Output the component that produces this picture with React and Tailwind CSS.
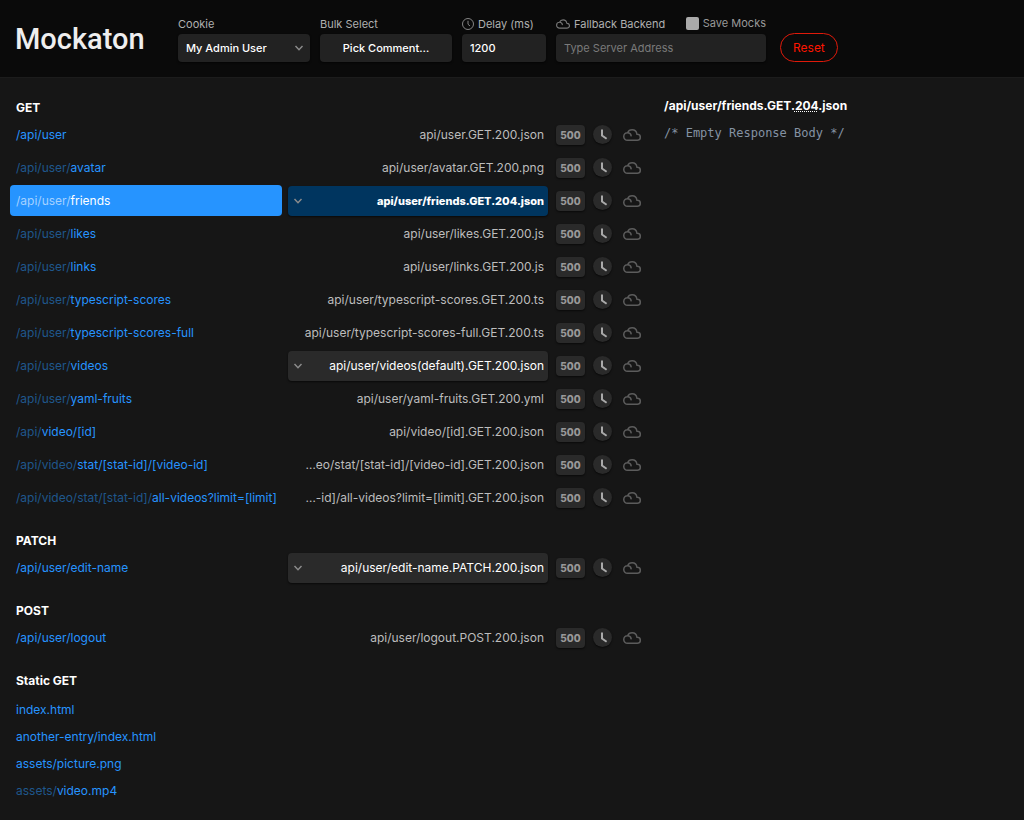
import React, { useState } from 'react'
import clsx from 'clsx'

const GROUPS = [
  {
    method: 'GET',
    routes: [
      { dim: '', url: '/api/user', file: 'api/user.GET.200.json' },
      { dim: '/api/user/', url: 'avatar', file: 'api/user/avatar.GET.200.png' },
      { dim: '/api/user/', url: 'friends', file: 'api/user/friends.GET.204.json', multiple: true, custom: true },
      { dim: '/api/user/', url: 'likes', file: 'api/user/likes.GET.200.js' },
      { dim: '/api/user/', url: 'links', file: 'api/user/links.GET.200.js' },
      { dim: '/api/user/', url: 'typescript-scores', file: 'api/user/typescript-scores.GET.200.ts' },
      { dim: '/api/user/', url: 'typescript-scores-full', file: 'api/user/typescript-scores-full.GET.200.ts' },
      { dim: '/api/user/', url: 'videos', file: 'api/user/videos(default).GET.200.json', multiple: true },
      { dim: '/api/user/', url: 'yaml-fruits', file: 'api/user/yaml-fruits.GET.200.yml' },
      { dim: '/api/', url: 'video/[id]', file: 'api/video/[id].GET.200.json' },
      { dim: '/api/video/', url: 'stat/[stat-id]/[video-id]', file: '…eo/stat/[stat-id]/[video-id].GET.200.json' },
      { dim: '/api/video/stat/[stat-id]/', url: 'all-videos?limit=[limit]', file: '…-id]/all-videos?limit=[limit].GET.200.json' },
    ],
  },
  {
    method: 'PATCH',
    routes: [{ dim: '', url: '/api/user/edit-name', file: 'api/user/edit-name.PATCH.200.json', multiple: true }],
  },
  {
    method: 'POST',
    routes: [{ dim: '', url: '/api/user/logout', file: 'api/user/logout.POST.200.json' }],
  },
]

const STATIC_FILES = [
  { dim: '', url: 'index.html' },
  { dim: '', url: 'another-entry/index.html' },
  { dim: '', url: 'assets/picture.png' },
  { dim: 'assets/', url: 'video.mp4' },
]

function CloudIcon({ className }) {
  return (
    <svg viewBox="0 0 24 24" fill="none" stroke="currentColor" strokeWidth="2" strokeLinecap="round" strokeLinejoin="round" className={className} aria-hidden="true">
      <path d="M6.1 8.9c.98-2.3 3.3-3.9 6-3.9 3.3 0 6 2.5 6.4 5.7.05.3.1.35.6.36 2.2 0 4 1.8 4 4s-1.8 4-4 4H6c-2.8 0-5-2.2-5-5s2.2-5 5-5c2.6 0 4.5 1.7 4.9 4" />
    </svg>
  )
}

function ClockIcon({ className }) {
  return (
    <svg viewBox="0 0 24 24" fill="none" stroke="currentColor" strokeWidth="2" className={className} aria-hidden="true">
      <circle cx="12" cy="12" r="11" />
      <path d="M12 5.5v7l4 3.5" />
    </svg>
  )
}

function DelayHands() {
  return (
    <svg viewBox="0 0 19 19" fill="none" stroke="currentColor" strokeWidth="2" className="size-[19px]" aria-hidden="true">
      <path d="M9 4.5v6l4.6 3.2" />
    </svg>
  )
}

function Chevron({ className }) {
  return (
    <svg viewBox="0 0 10 10" fill="none" stroke="currentColor" strokeWidth="1.4" className={clsx('pointer-events-none absolute top-1/2 size-[10px] -translate-y-1/2 text-[#8c8c8c]', className)} aria-hidden="true">
      <path d="M1.5 3 5 6.8 8.5 3" />
    </svg>
  )
}

const LABEL = 'flex h-4 items-center gap-1 text-[11px] text-[#b0b0b0]'
const FIELD = 'h-7 w-full appearance-none rounded-[4px] bg-[#222] px-2 text-[11px] font-medium text-white shadow-[0_1px_2px_rgba(0,0,0,0.6)] outline-none placeholder:font-normal placeholder:text-[#7a7a7a]'

function Header() {
  return (
    <header className="flex items-start border-b border-[#1c1c1c] bg-[#0a0a0a] pt-4 pb-[15px] pl-[15px]">
      <h1 className="mt-[6px] w-[163px] font-['Roboto',sans-serif] text-[29px] leading-[34px] font-medium text-[#eee]">Mockaton</h1>
      <form className="flex items-start gap-[10px]" onSubmit={(e) => e.preventDefault()}>
        <div className="flex w-[132px] flex-col gap-[2px]">
          <label htmlFor="cookie" className={LABEL}>Cookie</label>
          <div className="relative">
            <select id="cookie" className={FIELD}>
              <option>My Admin User</option>
            </select>
            <Chevron className="right-[6px]" />
          </div>
        </div>
        <div className="flex w-[132px] flex-col gap-[2px]">
          <label htmlFor="bulk" className={LABEL}>Bulk Select</label>
          <select id="bulk" className={clsx(FIELD, 'text-center')}>
            <option>Pick Comment…</option>
          </select>
        </div>
        <div className="flex w-[84px] flex-col gap-[2px]">
          <label htmlFor="delay" className={LABEL}>
            <ClockIcon className="size-3 text-[#858585]" />
            Delay (ms)
          </label>
          <input id="delay" type="text" inputMode="numeric" defaultValue="1200" className={FIELD} />
        </div>
        <div className="flex w-[210px] flex-col gap-[2px]">
          <div className="flex justify-between">
            <label htmlFor="fallback" className={LABEL}>
              <CloudIcon className="size-[14px] text-[#757575]" />
              Fallback Backend
            </label>
            <label htmlFor="save" className="flex h-[14px] items-center gap-1 text-[11px] text-[#999]">
              <input id="save" type="checkbox" className="size-[13px] appearance-none rounded-[2px] bg-[#aaa]" />
              Save Mocks
            </label>
          </div>
          <input id="fallback" type="url" placeholder="Type Server Address" className={FIELD} />
        </div>
        <button type="button" className="mt-[17px] ml-1 h-[29px] rounded-full border border-[#e01a0a] px-3 text-[12px] text-[#ff1500]">Reset</button>
      </form>
    </header>
  )
}

function RouteRow({ route, selected, onSelect }) {
  const id = route.dim + route.url
  return (
    <li className="flex h-[33px] items-center">
      <a
        href="#preview"
        onClick={onSelect}
        className={clsx('flex h-[31px] w-[272px] items-center rounded-[4px] pl-[6px] whitespace-nowrap', selected ? 'bg-[#2694ff] text-white' : 'text-[#2694ff]')}
      >
        <span className={selected ? 'text-[#a4d1ff]' : 'text-[#1f578c]'}>{route.dim}</span>
        <span>{route.url}</span>
      </a>
      <div className="relative ml-[6px] w-[260px]">
        <select
          aria-label={'Mock for ' + id}
          disabled={!route.multiple}
          className={clsx(
            'h-[30px] w-full appearance-none rounded-[4px] px-1 text-right opacity-100 outline-none [text-align-last:right]',
            !route.multiple && 'bg-transparent text-[#bdbdbd]',
            route.multiple && 'text-white shadow-[0_1px_2px_rgba(0,0,0,0.6)]',
            route.multiple && (route.custom ? 'bg-[#00355f] text-[11px] font-extrabold' : 'bg-[#2a2a2a]'),
          )}
        >
          <option>{route.file}</option>
        </select>
        {route.multiple && <Chevron className="left-[5px]" />}
      </div>
      <button type="button" aria-label={'Respond 500 on ' + id} className="ml-2 h-5 w-[29px] rounded-[4px] bg-[#2a2a2a] text-[10px] font-extrabold text-[#999] shadow-[0_1px_2px_rgba(0,0,0,0.6)]">
        500
      </button>
      <button type="button" aria-label={'Delay ' + id} className="ml-2 size-[19px] rounded-full bg-[#2a2a2a] text-[#aaa] shadow-[0_1px_2px_rgba(0,0,0,0.6)]">
        <DelayHands />
      </button>
      <button type="button" aria-label={'Proxy ' + id} className="ml-[11px] text-[#5c5c5c]">
        <CloudIcon className="size-[18px]" />
      </button>
    </li>
  )
}

export default function App() {
  const [selected, setSelected] = useState('/api/user/friends')
  return (
    <div className="min-h-screen bg-[#161616] font-['Inter',sans-serif] text-[12px] leading-[18px] text-white">
      <Header />
      <main className="flex items-start pt-[21px] pb-4 pl-[10px]">
        <div className="flex w-[632px] shrink-0 flex-col gap-[18px]">
          {GROUPS.map((group) => (
            <section key={group.method} className="flex flex-col gap-[1px]">
              <h2 className="pl-[6px] font-bold">{group.method}</h2>
              <ul>
                {group.routes.map((route) => (
                  <RouteRow
                    key={route.file}
                    route={route}
                    selected={route.dim + route.url === selected}
                    onSelect={() => setSelected(route.dim + route.url)}
                  />
                ))}
              </ul>
            </section>
          ))}
          <section className="flex flex-col gap-[6px] pl-[6px]">
            <h2 className="font-bold">Static GET</h2>
            <ul>
              {STATIC_FILES.map((file) => (
                <li key={file.url} className="flex h-[27px] items-center">
                  <a href={'#' + file.url} className="text-[#2694ff]">
                    <span className="text-[#1f578c]">{file.dim}</span>
                    {file.url}
                  </a>
                </li>
              ))}
            </ul>
          </section>
        </div>
        <section id="preview" className="ml-[22px] flex min-w-0 flex-1 flex-col gap-[9px] pr-4">
          <h2 className="-mt-[2px] font-bold">
            /api/user/friends.GET.<abbr title="No Content" className="underline decoration-dotted">204</abbr>.json
          </h2>
          <pre className="font-['DejaVu_Sans_Mono',monospace] text-[12px] text-[#8492a3]">
            <code className="font-['DejaVu_Sans_Mono',monospace]">/* Empty Response Body */</code>
          </pre>
        </section>
      </main>
    </div>
  )
}
